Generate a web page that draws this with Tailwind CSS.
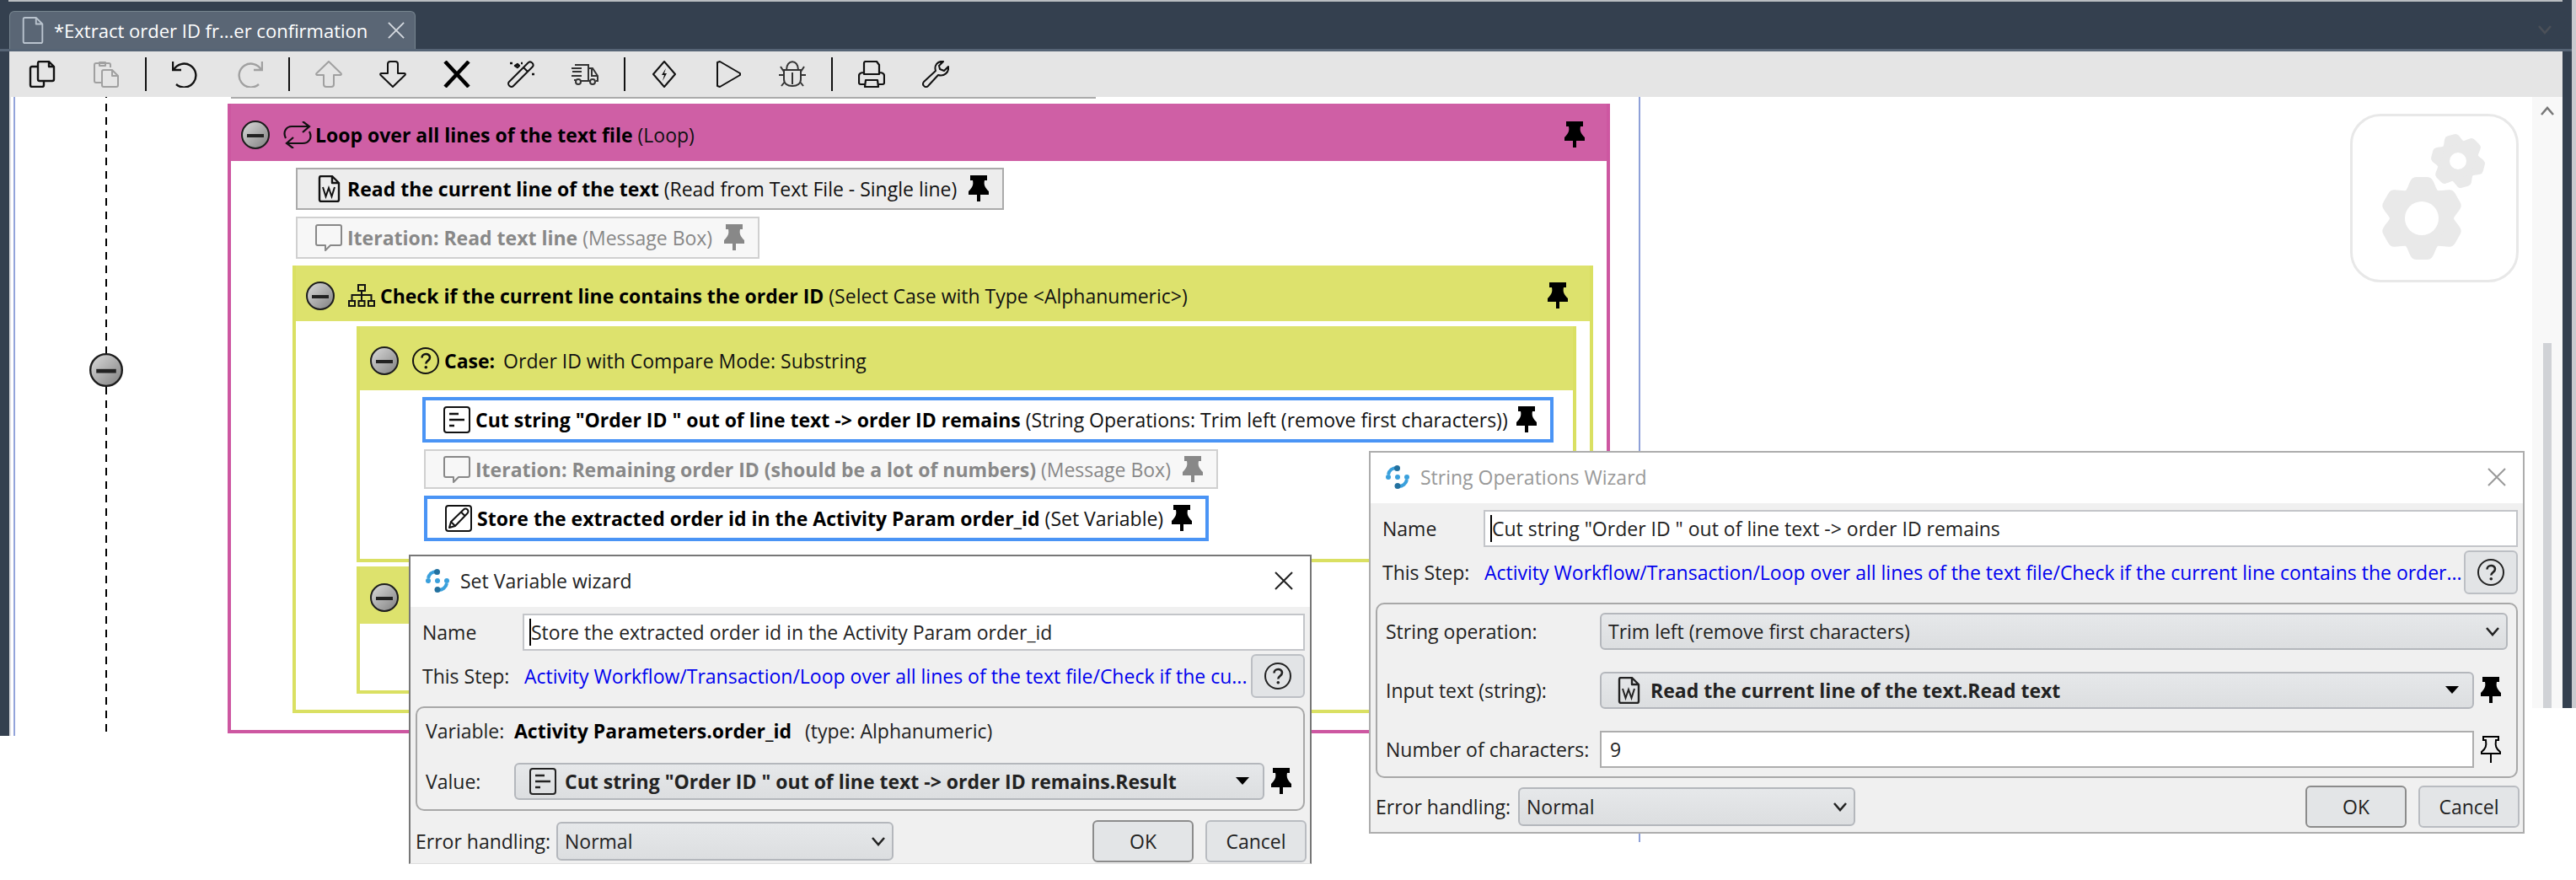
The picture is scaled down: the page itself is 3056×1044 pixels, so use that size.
<!DOCTYPE html>
<html lang="en">
<head>
<meta charset="utf-8">
<title>Workflow editor</title>
<script src="https://cdn.jsdelivr.net/npm/@tailwindcss/browser@4"></script>
</head>
<body class="bg-white font-['Open_Sans','Noto_Sans',sans-serif] text-[23px] leading-8 text-[#222]">

<!-- Icon library -->
<svg width="0" height="0" class="absolute" aria-hidden="true">
  <defs>
    <linearGradient id="metal" x1="0" y1="0" x2="1" y2="1"><stop offset="0" stop-color="#dcdcdc"/><stop offset="1" stop-color="#7f7f7f"/></linearGradient>
    <symbol id="minus" viewBox="0 0 34 34"><circle cx="17" cy="17" r="16" fill="url(#metal)" stroke="#1c1c1c" stroke-width="2"/><path d="M7 18h20" stroke="#222" stroke-width="4"/></symbol>
    <symbol id="pin" viewBox="0 0 24 32"><path d="M2 0h20v6h-3c-1 5 0 8 5 13v4H14v8h-4v-8H0v-4c5-5 6-8 5-13H2z" fill="currentColor"/></symbol>
    <symbol id="pin-outline" viewBox="0 0 24 32"><path d="M3 1h18v4h-3c-1 7 0 10 5 14v2H1v-2c5-4 6-7 5-14H3zM12 21v11" fill="none" stroke="currentColor" stroke-width="2"/></symbol>
    <symbol id="doc" viewBox="0 0 26 34"><path d="M3 1h14l8 8v22a2 2 0 0 1-2 2H3a2 2 0 0 1-2-2V3a2 2 0 0 1 2-2zM17 1v8h8" fill="none" stroke="currentColor" stroke-width="2" stroke-linejoin="round"/></symbol>
    <symbol id="word" viewBox="0 0 32 32"><path d="M7 1h13l8 8v20a2 2 0 0 1-2 2H7a2 2 0 0 1-2-2V3a2 2 0 0 1 2-2zM20 1v8h8" fill="none" stroke="currentColor" stroke-width="2.4" stroke-linejoin="round"/><path d="M9 14l3.500 11 3.500-10 3.500 10 3.500-11" fill="none" stroke="currentColor" stroke-width="2"/></symbol>
    <symbol id="chat" viewBox="0 0 32 32"><path d="M3 1h26a2 2 0 0 1 2 2v20a2 2 0 0 1-2 2H18l-6 6v-6H3a2 2 0 0 1-2-2V3a2 2 0 0 1 2-2z" fill="none" stroke="currentColor" stroke-width="2" stroke-linejoin="round"/></symbol>
    <symbol id="textbox" viewBox="0 0 32 32"><rect x="1" y="1" width="30" height="30" rx="3" fill="none" stroke="currentColor" stroke-width="2"/><path d="M7 9h11M7 16h18M7 23h6" stroke="currentColor" stroke-width="2.500"/></symbol>
    <symbol id="edit" viewBox="0 0 32 32"><rect x="1" y="1" width="30" height="30" rx="3" fill="none" stroke="currentColor" stroke-width="2"/><path d="M5 27l2-7L22 5.500a3 3 0 0 1 4.500 4.500L12 25zM19 8.500l4.500 4.500M7 20l5 5" fill="none" stroke="currentColor" stroke-width="2" stroke-linejoin="round"/></symbol>
    <symbol id="loop" viewBox="0 0 34 32"><path d="M3 20C-1 12 4 6 10 6h20M23 0l8 6-8 7M31 12c4 8-1 14-8 14H4M12 19l-8 7 8 6" fill="none" stroke="currentColor" stroke-width="2.200"/></symbol>
    <symbol id="tree" viewBox="0 0 32 32"><path d="M12 3h8v7h-8zM1 22h7v6H1zM12.500 22h7v6h-7zM24 22h7v6h-7zM16 10v12M4.500 22v-7h23v7" fill="none" stroke="currentColor" stroke-width="2"/></symbol>
    <symbol id="help" viewBox="0 0 32 32"><circle cx="16" cy="16" r="15" fill="none" stroke="currentColor" stroke-width="2"/><path d="M11.500 12.500c0-6 9.500-6 9.500-.5 0 4-4.700 3.800-4.700 7.500" fill="none" stroke="currentColor" stroke-width="2.600"/><circle cx="16.300" cy="23.800" r="1.800" fill="currentColor"/></symbol>
    <symbol id="close" viewBox="0 0 22 22"><path d="M1 1l20 20M21 1L1 21" stroke="currentColor" stroke-width="2"/></symbol>
    <symbol id="chevron" viewBox="0 0 16 12"><path d="M1 1l7 8 7-8" fill="none" stroke="currentColor" stroke-width="2.500"/></symbol>
    <symbol id="logo" viewBox="0 0 28 28"><g fill="none" stroke="#3aa0dc" stroke-width="4"><path d="M3 11C4 6 8 3 13 3"/><path d="M25 17c-1 5-5 8-10 8"/></g><g fill="#3aa0dc"><circle cx="3" cy="14" r="3"/><circle cx="25" cy="14" r="3"/><circle cx="14" cy="14" r="3"/></g><g fill="#23719f"><circle cx="13.500" cy="3.500" r="3.500"/><circle cx="14" cy="24.500" r="3.500"/></g></symbol>
    <symbol id="undo" viewBox="0 0 32 32"><path d="M1 1v10h10M2 11A14 14 0 1 1 5 28" fill="none" stroke="currentColor" stroke-width="2.400"/></symbol>
    <symbol id="arrow" viewBox="0 0 32 32"><path d="M16 1l14.500 14c.8 1.400.2 2-1 2H22v11a3 3 0 0 1-3 3h-6a3 3 0 0 1-3-3V17H2.500c-1.200 0-1.800-.6-1-2z" fill="none" stroke="currentColor" stroke-width="2" stroke-linejoin="round"/></symbol>
  </defs>
</svg>

<div class="relative min-h-screen overflow-hidden">

  <!-- Tab strip -->
  <header class="flex h-[61px]">
    <div class="flex-1 flex items-end border-b-[3px] border-b-[#566475] bg-[#34404f] pl-[11px]">
      <div class="flex h-[45px] w-[482px] items-center rounded-t-md border border-b-0 border-[#77858f] bg-[#5a6675] pl-[14px] text-[22px] text-white">
        <svg class="h-8 w-[26px] text-[#b9c3ce]"><use href="#doc"/></svg>
        <span class="ml-3 whitespace-nowrap">*Extract order ID fr...er confirmation</span>
        <button class="ml-6" aria-label="Close tab"><svg class="size-5 text-[#d5dae0]"><use href="#close"/></svg></button>
      </div>
      <button class="mr-6 mb-4 ml-auto text-[#4b5058]" aria-label="More tabs"><svg class="h-3 w-4"><use href="#chevron"/></svg></button>
    </div>
    <div class="w-[5px] bg-[#c9cacf]"></div>
  </header>
  <div class="absolute top-0 right-4 left-[10px] h-[2px] bg-[#b9bdc1]"></div>

  <!-- Editor body -->
  <div class="flex items-start">
    <div class="h-[812px] w-[11px] shrink-0 bg-[#34404f]"></div>
    <div class="min-w-0 flex-1">
      <div class="flex h-[54px] items-center bg-[#e5e5e5] pl-px text-[#111]" role="toolbar" aria-label="Workflow tools">
        <button class="flex w-[76px] justify-center" aria-label="Copy"><svg class="size-8" viewBox="0 0 32 32" fill="none" stroke="currentColor" stroke-width="2.400" stroke-linejoin="round"><path d="M10 7H4a2 2 0 0 0-2 2v20a2 2 0 0 0 2 2h12a2 2 0 0 0 2-2v-4M13 1h11l6 6v15a2 2 0 0 1-2 2H13a2 2 0 0 1-2-2V3a2 2 0 0 1 2-2zM24 1v6h6"/></svg></button>
        <button class="flex w-[76px] justify-center text-[#a0a0a0]" aria-label="Paste"><svg class="size-8" viewBox="0 0 32 32" fill="none" stroke="currentColor" stroke-width="2" stroke-linejoin="round"><path d="M10 26H4a2 2 0 0 1-2-2V5a2 2 0 0 1 2-2h15a2 2 0 0 1 2 2v3M8 2h7v4H8zM13 11h10l7 7v11a2 2 0 0 1-2 2H13a2 2 0 0 1-2-2V13a2 2 0 0 1 2-2zM23 11v7h7"/></svg></button>
        <span class="mx-2 h-10 w-[2px] bg-[#111]"></span>
        <button class="flex w-[76px] justify-center" aria-label="Undo"><svg class="size-8"><use href="#undo"/></svg></button>
        <button class="flex w-[76px] justify-center text-[#a0a0a0]" aria-label="Redo"><svg class="size-8 -scale-x-100"><use href="#undo"/></svg></button>
        <span class="mx-2 h-10 w-[2px] bg-[#111]"></span>
        <button class="flex w-[76px] justify-center text-[#a0a0a0]" aria-label="Move up"><svg class="size-8"><use href="#arrow"/></svg></button>
        <button class="flex w-[76px] justify-center" aria-label="Move down"><svg class="size-8 rotate-180"><use href="#arrow"/></svg></button>
        <button class="flex w-[76px] justify-center" aria-label="Delete"><svg class="size-8" viewBox="0 0 32 32" stroke="#000" stroke-width="4.500"><path d="M2 1l28 30M30 1L2 31"/></svg></button>
        <button class="flex w-[76px] justify-center" aria-label="Magic wand"><svg class="size-8" viewBox="0 0 32 32" fill="none" stroke="currentColor" stroke-width="2" stroke-linejoin="round"><path d="M2 25L25 2c3-2 7 2 5 5L7 30c-3 3-8-2-5-5zM19 8l5 5"/><path d="M3 3h3M9 6l3-2 2 2-2 2zM16 3h2M29 16h3" stroke-width="2.400"/></svg></button>
        <button class="flex w-[76px] justify-center text-[#333]" aria-label="Deploy"><svg class="size-8" viewBox="0 0 32 32" fill="none" stroke="currentColor" stroke-width="2"><path d="M4 5h16v19h-9M20 9h5l6 9v6h-2M20 24h2M0 9h12M1 13h11M0 18h12M4 22v2M24 10v8h7"/><circle cx="8" cy="25" r="3"/><circle cx="25" cy="25" r="3"/></svg></button>
        <span class="mx-2 h-10 w-[2px] bg-[#111]"></span>
        <button class="flex w-[76px] justify-center" aria-label="Events"><svg class="size-8" viewBox="0 0 32 32" fill="none" stroke="currentColor" stroke-width="2" stroke-linejoin="round"><path d="M16 1l13 15-13 15L3 16z"/><path d="M18 9l-5 8h3l-2 7 5-9h-3z" fill="currentColor" stroke="none"/></svg></button>
        <button class="flex w-[76px] justify-center" aria-label="Run"><svg class="size-8" viewBox="0 0 32 32" fill="none" stroke="currentColor" stroke-width="2" stroke-linejoin="round"><path d="M3 2v28l3 1 24-14v-2L6 1z"/></svg></button>
        <button class="flex w-[76px] justify-center text-[#333]" aria-label="Debug"><svg class="size-8" viewBox="0 0 32 32" fill="none" stroke="currentColor" stroke-width="2"><path d="M6 11h20v11c0 5-4 8-10 8S6 27 6 22zM9 11c0-13 14-13 14 0M16 14v14M0 17h6M26 17h6M6 13L2 7M26 13l4-6M7 25l-4 5M25 25l4 5"/></svg></button>
        <span class="mx-2 h-10 w-[2px] bg-[#111]"></span>
        <button class="flex w-[76px] justify-center" aria-label="Print"><svg class="size-8" viewBox="0 0 32 32" fill="none" stroke="currentColor" stroke-width="2.200" stroke-linejoin="round"><path d="M7 16V3a2 2 0 0 1 2-2h13l3 4v11zM8 28H3a2 2 0 0 1-2-2v-8c0-3 2-4 6-4M25 14c4 0 6 1 6 4v8a2 2 0 0 1-2 2h-5M9 23h14l1 8H8z"/></svg></button>
        <button class="flex w-[76px] justify-center" aria-label="Settings"><svg class="size-8" viewBox="0 0 32 32" fill="none" stroke="currentColor" stroke-width="2" stroke-linejoin="round"><path d="M25 1c-7-1-11 5-9 11L2 25c-3 4 2 8 5 5l12-13c7 2 13-3 12-10l-5 5-5-2-1-4z"/></svg></button>
      </div>

      <!-- Canvas -->
      <div class="flex items-start">
        <div class="mr-[3px] h-[758px] w-[2px] bg-[#e2e2e6]"></div>
        <div class="h-[758px] w-[2px] bg-[#93a4da]"></div>
        <div class="relative flex h-[755px] w-[252px] shrink-0 items-start justify-center pt-[304px]">
          <svg class="absolute top-0 left-[107px] h-full w-[2px]" aria-hidden="true"><path d="M1 -8v780" stroke="#000" stroke-width="2" stroke-dasharray="9 7"/></svg>
          <button class="absolute left-[88px]" aria-label="Collapse transaction"><svg class="size-10"><use href="#minus"/></svg></button>
        </div>

        <main class="w-[1640px] shrink-0 text-[#111]">
          <div class="mb-[6px] ml-1 h-[2px] w-[1026px] bg-[#aaa]"></div>
          <!-- Loop -->
          <section class="border-4 border-t-0 border-[#cd57a1]">
            <div class="flex h-[68px] items-center bg-[#cf5fa5] pt-[6px] pr-[26px] pl-3">
              <button aria-label="Collapse loop"><svg class="size-[34px]"><use href="#minus"/></svg></button>
              <svg class="ml-4 h-8 w-[34px]"><use href="#loop"/></svg>
              <h2 class="ml-1 whitespace-nowrap"><b class="text-black">Loop over all lines of the text file</b> (Loop)</h2>
              <svg class="ml-auto h-8 w-6 text-black"><use href="#pin"/></svg>
            </div>
            <div class="flex flex-col items-start gap-2 pt-2 pr-4 pb-5 pl-[73px]">
              <div class="ml-1 flex h-[50px] items-center border-2 border-[#aaa] bg-[#ededed] pr-4 pl-[21px]">
                <svg class="size-8"><use href="#word"/></svg>
                <p class="mr-[14px] ml-[6px] whitespace-nowrap"><b class="text-black">Read the current line of the text</b> (Read from Text File - Single line)</p>
                <svg class="h-8 w-6 text-black"><use href="#pin"/></svg>
              </div>
              <div class="ml-1 flex h-[50px] items-center border-2 border-[#d0d0d0] bg-[#f7f7f7] pr-4 pl-[21px] text-[#888]">
                <svg class="size-8"><use href="#chat"/></svg>
                <p class="mr-[14px] ml-[6px] whitespace-nowrap"><b>Iteration: Read text line</b> (Message Box)</p>
                <svg class="h-8 w-6"><use href="#pin"/></svg>
              </div>

              <!-- Select case -->
              <section class="w-full border-4 border-t-0 border-[#dae062]">
                <div class="flex h-[66px] items-center bg-[#dde26d] pt-[6px] pr-[26px] pl-3">
                  <button aria-label="Collapse select case"><svg class="size-[34px]"><use href="#minus"/></svg></button>
                  <svg class="ml-4 size-8"><use href="#tree"/></svg>
                  <h3 class="ml-[6px] whitespace-nowrap"><b class="text-black">Check if the current line contains the order ID</b> (Select Case with Type &lt;Alphanumeric&gt;)</h3>
                  <svg class="ml-auto h-8 w-6 text-black"><use href="#pin"/></svg>
                </div>
                <div class="flex flex-col items-start gap-[5px] pt-[6px] pr-4 pb-[19px] pl-[72px]">
                  <section class="w-full border-4 border-t-0 border-[#dae062]">
                    <div class="flex h-[76px] items-center bg-[#dde26d] pt-[6px] pl-3">
                      <button aria-label="Collapse case"><svg class="size-[34px]"><use href="#minus"/></svg></button>
                      <svg class="ml-4 size-8"><use href="#help"/></svg>
                      <h4 class="ml-[6px] whitespace-nowrap"><b class="mr-1 text-black">Case:</b> Order ID with Compare Mode: Substring</h4>
                    </div>
                    <div class="flex flex-col items-start gap-2 pt-2 pb-[21px] pl-[74px]">
                      <div class="flex h-[54px] items-center border-4 border-[#4a94f5] bg-white pr-4 pl-[21px]">
                        <svg class="size-8"><use href="#textbox"/></svg>
                        <p class="mr-[10px] ml-[6px] whitespace-nowrap"><b class="text-black">Cut string "Order ID " out of line text -&gt; order ID remains</b> (String Operations: Trim left (remove first characters))</p>
                        <svg class="h-8 w-6 text-black"><use href="#pin"/></svg>
                      </div>
                      <div class="ml-[2px] flex h-[47px] items-center border-2 border-[#d0d0d0] bg-[#f7f7f7] pr-4 pl-[21px] text-[#888]">
                        <svg class="size-8"><use href="#chat"/></svg>
                        <p class="mr-[14px] ml-[6px] whitespace-nowrap"><b>Iteration: Remaining order ID (should be a lot of numbers)</b> (Message Box)</p>
                        <svg class="h-8 w-6"><use href="#pin"/></svg>
                      </div>
                      <div class="ml-[2px] flex h-[54px] items-center border-4 border-[#4a94f5] bg-white pr-4 pl-[21px]">
                        <svg class="size-8"><use href="#edit"/></svg>
                        <p class="mr-[10px] ml-[6px] whitespace-nowrap"><b class="text-black">Store the extracted order id in the Activity Param order_id</b> (Set Variable)</p>
                        <svg class="h-8 w-6 text-black"><use href="#pin"/></svg>
                      </div>
                    </div>
                  </section>
                  <section class="h-[151px] w-1/2 border-4 border-t-0 border-[#dae062]">
                    <div class="flex h-[68px] items-center bg-[#dde26d] pt-[6px] pl-3">
                      <button aria-label="Collapse second case"><svg class="size-[34px]"><use href="#minus"/></svg></button>
                    </div>
                  </section>
                </div>
              </section>
            </div>
          </section>
        </main>

        <div class="ml-[34px] h-[884px] w-[2px] bg-[#8ea0d8]"></div>
        <div class="flex flex-1 justify-end pt-5 pr-4">
          <div class="size-[200px] rounded-[36px] border-[3px] border-[#e8e8e8]">
            <svg class="size-full" viewBox="2791 138 194 194" aria-hidden="true">
              <defs><path id="tooth" d="M-21 -30C-16 -36-16 -40-13 -45Q-11 -49-6 -49H6Q11 -49 13 -45C16 -40 16 -36 21 -30z"/>
              <g id="gear" fill="#e9e9e9"><circle r="37"/><use href="#tooth"/><use href="#tooth" transform="rotate(60)"/><use href="#tooth" transform="rotate(120)"/><use href="#tooth" transform="rotate(180)"/><use href="#tooth" transform="rotate(240)"/><use href="#tooth" transform="rotate(300)"/></g></defs>
              <use href="#gear" transform="translate(2873 259)"/>
              <circle cx="2873" cy="259" r="20" fill="#fff"/>
              <use href="#gear" transform="translate(2916 191) rotate(-15) scale(.65)"/>
              <circle cx="2916" cy="191" r="10" fill="#fff"/>
            </svg>
          </div>
        </div>
        <div class="flex h-[725px] w-9 flex-col items-center bg-[#f8f8f8] pt-[10px]">
          <button aria-label="Scroll up"><svg class="h-3 w-5 rotate-180 text-[#777]"><use href="#chevron"/></svg></button>
          <div class="mt-auto h-[433px] w-[10px] bg-[#d0d2d6]"></div>
        </div>
      </div>
    </div>
    <div class="flex h-[779px] w-4 shrink-0">
      <div class="w-[11px] bg-[#34404f]"></div>
      <div class="w-[5px] bg-[#c9cacf]"></div>
    </div>
  </div>

  <!-- Set Variable dialog -->
  <div role="dialog" aria-labelledby="t1" class="absolute top-[658px] left-[485px] w-[1071px] border-2 border-b border-[#777] border-b-[#ddd] bg-[#f0f0f0]">
    <div class="flex h-[60px] items-center bg-white pr-5 pb-[2px] pl-[18px]">
      <svg class="size-7"><use href="#logo"/></svg>
      <h2 id="t1" class="ml-[13px]">Set Variable wizard</h2>
      <button class="ml-auto" aria-label="Close"><svg class="size-[22px]"><use href="#close"/></svg></button>
    </div>
    <form class="pt-2 pr-1 pl-[6px]">
      <div class="mr-[2px] flex h-[44px] items-center pl-2">
        <label for="n1" class="w-[119px]">Name</label>
        <div class="relative flex-1">
          <input id="n1" class="block h-[44px] w-full border-2 border-[#c3c5c9] bg-white pl-2" value="Store the extracted order id in the Activity Param order_id">
          <span class="absolute top-[6px] left-2 h-8 w-[2px] bg-black"></span>
        </div>
      </div>
      <div class="mt-1 mr-[2px] flex h-[52px] items-center pl-2">
        <span class="w-[121px]">This Step:</span>
        <a href="#" class="whitespace-nowrap text-[#0000ee]">Activity Workflow/Transaction/Loop over all lines of the text file/Check if the cu...</a>
        <button type="button" aria-label="Help" class="ml-auto flex h-[52px] w-16 items-center justify-center rounded-md border-2 border-[#bcbfc4] bg-[#e2e4e6]"><svg class="size-8"><use href="#help"/></svg></button>
      </div>
      <div class="mt-[10px] mr-[2px] rounded-[10px] border-2 border-[#a8a8a8] px-[10px] pt-[11px] pb-[11px]">
        <div class="flex h-8 items-center">
          <span class="w-[105px]">Variable:</span>
          <b class="whitespace-nowrap text-black">Activity Parameters.order_id</b>
          <span class="ml-4 whitespace-nowrap">(type: Alphanumeric)</span>
        </div>
        <div class="mt-[22px] flex items-center">
          <label for="v1" class="w-[105px]">Value:</label>
          <div class="relative w-[890px]">
            <select id="v1" class="block h-[44px] w-full appearance-none rounded-md border-2 border-[#b4b7bc] bg-linear-to-b from-[#e6e8ea] to-[#dcdee0] pl-[58px] font-bold"><option>Cut string "Order ID " out of line text -&gt; order ID remains.Result</option></select>
            <svg class="pointer-events-none absolute top-[6px] left-[18px] size-8"><use href="#textbox"/></svg>
            <svg class="pointer-events-none absolute top-[17px] right-[18px] h-[9px] w-4" viewBox="0 0 16 9"><path d="M0 0h16L8 9z" fill="#000"/></svg>
          </div>
          <svg class="ml-2 h-8 w-6 text-black"><use href="#pin"/></svg>
        </div>
      </div>
      <div class="mt-[10px] flex h-[52px] items-center">
        <label for="e1" class="w-[167px]">Error handling:</label>
        <div class="relative w-[400px]">
          <select id="e1" class="block h-[46px] w-full appearance-none rounded-md border-2 border-[#b4b7bc] bg-linear-to-b from-[#e6e8ea] to-[#dcdee0] pl-2"><option>Normal</option></select>
          <svg class="pointer-events-none absolute top-[18px] right-[10px] h-3 w-4"><use href="#chevron"/></svg>
        </div>
        <button type="button" class="ml-auto h-[50px] w-[120px] rounded-md border-2 border-[#8c8c8c] bg-[#e3e5e7]">OK</button>
        <button type="button" class="ml-[14px] h-[50px] w-[120px] rounded-md border-2 border-[#b9bcc1] bg-[#e3e5e7]">Cancel</button>
      </div>
    </form>
  </div>

  <!-- String Operations dialog -->
  <div role="dialog" aria-labelledby="t2" class="absolute top-[535px] left-[1624px] w-[1371px] border-2 border-[#adadad] bg-[#f0f0f0]">
    <div class="flex h-[60px] items-center bg-white pr-5 pb-[2px] pl-[18px]">
      <svg class="size-7"><use href="#logo"/></svg>
      <h2 id="t2" class="ml-[13px] text-[#999]">String Operations Wizard</h2>
      <button class="ml-auto text-[#999]" aria-label="Close"><svg class="size-[22px]"><use href="#close"/></svg></button>
    </div>
    <form class="pt-2 pr-1 pb-1 pl-[6px]">
      <div class="mr-[2px] flex h-[44px] items-center pl-2">
        <label for="n2" class="w-[120px]">Name</label>
        <div class="relative flex-1">
          <input id="n2" class="block h-[44px] w-full border-2 border-[#c3c5c9] bg-white pl-2" value="Cut string &quot;Order ID &quot; out of line text -&gt; order ID remains">
          <span class="absolute top-[6px] left-2 h-8 w-[2px] bg-black"></span>
        </div>
      </div>
      <div class="mt-1 mr-[2px] flex h-[52px] items-center pl-2">
        <span class="w-[121px] shrink-0">This Step:</span>
        <a href="#" class="w-0 flex-1 whitespace-nowrap text-[#0000ee]">Activity Workflow/Transaction/Loop over all lines of the text file/Check if the current line contains the order...</a>
        <button type="button" aria-label="Help" class="flex h-[52px] w-16 shrink-0 items-center justify-center rounded-md border-2 border-[#bcbfc4] bg-[#e2e4e6]"><svg class="size-8"><use href="#help"/></svg></button>
      </div>
      <div class="mt-[10px] mr-[2px] flex flex-col gap-[26px] rounded-[10px] border-2 border-[#a8a8a8] p-[10px]">
        <div class="flex items-center">
          <label for="s2" class="w-[254px]">String operation:</label>
          <div class="relative flex-1">
            <select id="s2" class="block h-[44px] w-full appearance-none rounded-md border-2 border-[#b4b7bc] bg-linear-to-b from-[#e6e8ea] to-[#dcdee0] pl-2"><option>Trim left (remove first characters)</option></select>
            <svg class="pointer-events-none absolute top-[17px] right-[10px] h-3 w-4"><use href="#chevron"/></svg>
          </div>
        </div>
        <div class="flex items-center pr-2">
          <label for="i2" class="w-[254px]">Input text (string):</label>
          <div class="relative flex-1">
            <select id="i2" class="block h-[44px] w-full appearance-none rounded-md border-2 border-[#b4b7bc] bg-linear-to-b from-[#e6e8ea] to-[#dcdee0] pl-[58px] font-bold"><option>Read the current line of the text.Read text</option></select>
            <svg class="pointer-events-none absolute top-[6px] left-[18px] size-8"><use href="#word"/></svg>
            <svg class="pointer-events-none absolute top-[17px] right-[18px] h-[9px] w-4" viewBox="0 0 16 9"><path d="M0 0h16L8 9z" fill="#000"/></svg>
          </div>
          <svg class="ml-2 h-8 w-6 text-black"><use href="#pin"/></svg>
        </div>
        <div class="flex items-center pr-2">
          <label for="c2" class="w-[254px] whitespace-nowrap">Number of characters:</label>
          <input id="c2" class="block h-[44px] min-w-0 flex-1 border-2 border-[#adadad] bg-white pl-[10px]" value="9">
          <svg class="ml-2 h-8 w-6 text-black"><use href="#pin-outline"/></svg>
        </div>
      </div>
      <div class="mt-2 flex h-[52px] items-center">
        <label for="e2" class="w-[169px]">Error handling:</label>
        <div class="relative w-[400px]">
          <select id="e2" class="block h-[46px] w-full appearance-none rounded-md border-2 border-[#b4b7bc] bg-linear-to-b from-[#e6e8ea] to-[#dcdee0] pl-2"><option>Normal</option></select>
          <svg class="pointer-events-none absolute top-[18px] right-[10px] h-3 w-4"><use href="#chevron"/></svg>
        </div>
        <button type="button" class="ml-auto h-[50px] w-[120px] rounded-md border-2 border-[#8c8c8c] bg-[#e3e5e7]">OK</button>
        <button type="button" class="ml-[14px] h-[50px] w-[120px] rounded-md border-2 border-[#b9bcc1] bg-[#e3e5e7]">Cancel</button>
      </div>
    </form>
  </div>
</div>
</body>
</html>
